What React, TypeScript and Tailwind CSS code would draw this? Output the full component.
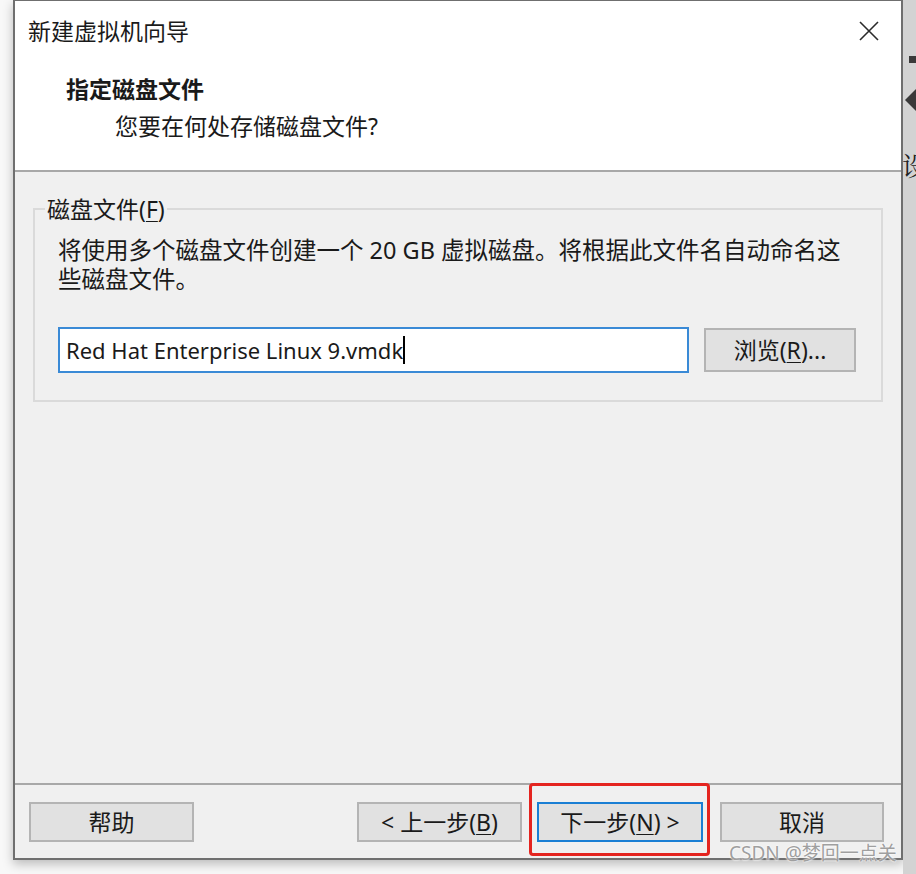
import React from "react";

const Key = ({ children }: { children: React.ReactNode }) => (
	<span className="underline underline-offset-[3px] decoration-1">{children}</span>
);

const WinButton = ({
	children,
	focused = false,
	className = "",
}: {
	children: React.ReactNode;
	focused?: boolean;
	className?: string;
}) => (
	<div
		className={
			"h-[40px] flex items-center justify-center bg-[#e1e1e1] text-[23px] text-[#1a1a1a] border-2 " +
			(focused ? "border-[#1a7fd4]" : "border-[#b4b4b4]") +
			" " +
			className
		}
	>
		{children}
	</div>
);

const App = () => {
	return (
		<div className="relative w-[916px] h-[874px] bg-[#f8f8f8] flex overflow-hidden font-['Noto_Sans','Noto_Sans_CJK_SC',sans-serif] text-[#1a1a1a]">
			<div className="w-[13px] shrink-0" />
			<div className="w-[890px] h-[860px] shrink-0 flex flex-col bg-[#f0f0f0] border-2 border-t border-[#6f6f6f] shadow-[0_4px_10px_rgba(0,0,0,0.25)]">
				{/* header */}
				<div className="h-[171px] shrink-0 bg-white border-b-2 border-[#a8a8a8] flex flex-col">
					<div className="mt-[14px] h-[32px] flex items-center justify-between pl-[13px] pr-[21px]">
						<span className="text-[23px] leading-[32px]">新建虚拟机向导</span>
						<svg width="22" height="22" viewBox="0 0 22 22">
							<path d="M2 2 L20 20 M20 2 L2 20" stroke="#2b2b2b" strokeWidth="1.6" />
						</svg>
					</div>
					<div className="mt-[27px] pl-[51px] text-[23px] leading-[30px] font-bold">
						指定磁盘文件
					</div>
					<div className="mt-[7px] pl-[100px] text-[23px] leading-[30px]">
						您要在何处存储磁盘文件?
					</div>
				</div>

				{/* body */}
				<div className="flex-1 px-[18px] pt-[22px]">
					<fieldset className="border-2 border-[#dadada] pl-[23px] pr-[25px] pb-[27px]">
						<legend className="ml-[-13px] px-[2px] text-[23px] leading-[30px]">
							磁盘文件(<Key>F</Key>)
						</legend>
						<p className="mt-[12px] text-[23.5px] leading-[29px] whitespace-nowrap">
							将使用多个磁盘文件创建一个 20 GB 虚拟磁盘。将根据此文件名自动命名这
							<br />
							些磁盘文件。
						</p>
						<div className="mt-[33px] flex items-center gap-[15px]">
							<div className="w-[631px] h-[46px] bg-white border-2 border-[#3a8ad6] flex items-center pl-[6px] text-[22px]">
								<span>Red Hat Enterprise Linux 9.vmdk</span>
								<span className="w-[1.5px] h-[28px] bg-black" />
							</div>
							<WinButton className="w-[152px] h-[44px]">
								浏览(<Key>R</Key>)...
							</WinButton>
						</div>
					</fieldset>
				</div>

				{/* footer */}
				<div className="h-[75px] shrink-0 border-t-2 border-[#a8a8a8] flex items-start pt-[17px] pl-[14px] pr-[17px]">
					<WinButton className="w-[165px]">帮助</WinButton>
					<div className="flex-1" />
					<WinButton className="w-[165px]">
						&lt; 上一步(<Key>B</Key>)
					</WinButton>
					<div className="relative ml-[15px]">
						<WinButton focused className="w-[166px]">
							下一步(<Key>N</Key>) &gt;
						</WinButton>
						<div className="absolute left-[-8px] top-[-19px] w-[181px] h-[73px] border-[3px] border-[#e4241f] rounded-[4px]" />
					</div>
					<WinButton className="ml-[17px] w-[164px]">取消</WinButton>
				</div>
			</div>

			{/* background window strip */}
			<div className="flex-1 bg-[#d3d3d3] relative overflow-hidden font-['Noto_Serif_CJK_SC','Noto_Sans_CJK_SC',serif]">
				<div className="absolute left-[6px] top-[56px] w-[10px] h-[7px] bg-[#3a3a3a]" />
				<div className="absolute left-[2px] top-[88px] w-0 h-0 border-y-[12px] border-y-transparent border-r-[12px] border-r-[#3a3a3a]" />
				<div className="absolute left-[-1px] top-[150px] text-[26px] leading-[30px] text-[#222]">设</div>
			</div>

			{/* watermark */}
			<div className="absolute left-[729px] top-[840px] text-[19px] leading-[26px] text-[#9f9f9f] [text-shadow:0_0_2px_#fff,0_0_2px_#fff]">
				CSDN @梦回一点关
			</div>
		</div>
	);
};

export default App;
